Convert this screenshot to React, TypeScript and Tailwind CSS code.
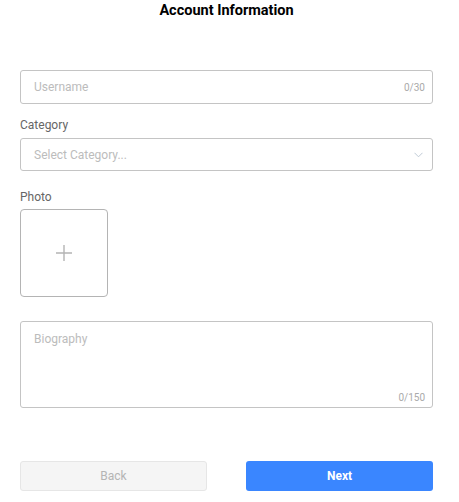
import * as React from 'react';

/**
 * Account information step of a sign-up form.
 */
function Counter({ text }: { text: string }) {
  return <span className="text-[10px] text-[#aaaaaa]">{text}</span>;
}

export default function App() {
  return (
    <div
      className="w-[459px] h-[502px] bg-white pl-5 pr-[26px]"
      style={{ fontFamily: 'Roboto, "Liberation Sans", sans-serif' }}
    >
      <h1 className="text-center text-[14.5px] font-bold leading-[22px] text-black">
        Account Information
      </h1>

      {/* Username */}
      <div className="mt-[48px] flex h-[34px] items-center justify-between rounded-[3px] border border-[#c4c4c4] pl-[13px] pr-[7px]">
        <span className="text-[12px] text-[#bcbcbc]">Username</span>
        <Counter text="0/30" />
      </div>

      {/* Category */}
      <div className="mt-[13px] text-[12px] leading-[16px] text-[#666666]">Category</div>
      <div className="mt-[5px] flex h-[33px] items-center justify-between rounded-[3px] border border-[#c4c4c4] pl-[13px] pr-[9px]">
        <span className="text-[12px] text-[#bcbcbc]">Select Category...</span>
        <svg width="9" height="6" viewBox="0 0 9 6" fill="none">
          <path d="M0.5 0.8 L4.5 4.8 L8.5 0.8" stroke="#b8c4d0" strokeWidth="0.9" />
        </svg>
      </div>

      {/* Photo */}
      <div className="mt-[18px] text-[12px] leading-[16px] text-[#666666]">Photo</div>
      <div className="mt-[4px] flex h-[88px] w-[88px] items-center justify-center rounded-[4px] border border-[#b4b4b4]">
        <svg width="16" height="16" viewBox="0 0 16 16" fill="none">
          <path d="M8 0 V16 M0 8 H16" stroke="#b4b4b4" strokeWidth="1.4" />
        </svg>
      </div>

      {/* Biography */}
      <div className="mt-[24px] flex h-[87px] flex-col justify-between rounded-[3px] border border-[#c4c4c4] pb-[2px] pl-[13px] pr-[7px] pt-[9px]">
        <span className="text-[12px] leading-[16px] text-[#bcbcbc]">Biography</span>
        <div className="flex justify-end">
          <Counter text="0/150" />
        </div>
      </div>

      {/* Actions */}
      <div className="mt-[53px] flex justify-between">
        <button className="h-[30px] w-[187px] rounded-[3px] border border-[#e6e6e6] bg-[#f5f5f5] text-[12px] text-[#b4b4b4]">
          Back
        </button>
        <button className="h-[30px] w-[187px] rounded-[3px] bg-[#3a86ff] text-[12px] font-bold text-white">
          Next
        </button>
      </div>
    </div>
  );
}
